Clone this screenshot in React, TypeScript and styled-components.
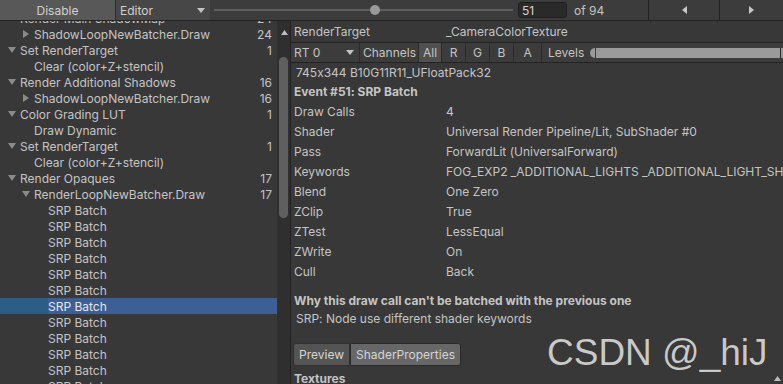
import React from "react";
import styled, { createGlobalStyle } from "styled-components";

const GlobalStyle = createGlobalStyle`
  html, body {
    margin: 0;
    padding: 0;
    background: #383838;
  }
  body {
    font-family: Inter, "Noto Sans", sans-serif;
    font-size: 12px;
    color: #c4c4c4;
    font-feature-settings: "calt" 0;
  }
`;

type TreeNode = {
  name: string;
  level: number;
  arrow?: "down" | "right";
  count?: number;
  selected?: boolean;
};

const batches: TreeNode[] = Array.from({ length: 12 }, (_, i) => ({
  name: "SRP Batch",
  level: 2,
  selected: i === 6,
}));

const tree: TreeNode[] = [
  { name: "Render Main ShadowMap", level: 0, arrow: "down", count: 24 },
  { name: "ShadowLoopNewBatcher.Draw", level: 1, arrow: "right", count: 24 },
  { name: "Set RenderTarget", level: 0, arrow: "down", count: 1 },
  { name: "Clear (color+Z+stencil)", level: 1 },
  { name: "Render Additional Shadows", level: 0, arrow: "down", count: 16 },
  { name: "ShadowLoopNewBatcher.Draw", level: 1, arrow: "right", count: 16 },
  { name: "Color Grading LUT", level: 0, arrow: "down", count: 1 },
  { name: "Draw Dynamic", level: 1 },
  { name: "Set RenderTarget", level: 0, arrow: "down", count: 1 },
  { name: "Clear (color+Z+stencil)", level: 1 },
  { name: "Render Opaques", level: 0, arrow: "down", count: 17 },
  { name: "RenderLoopNewBatcher.Draw", level: 1, arrow: "down", count: 17 },
  ...batches,
];

const details: [string, string][] = [
  ["Draw Calls", "4"],
  ["Shader", "Universal Render Pipeline/Lit, SubShader #0"],
  ["Pass", "ForwardLit (UniversalForward)"],
  ["Keywords", "FOG_EXP2 _ADDITIONAL_LIGHTS _ADDITIONAL_LIGHT_SHADOWS _MAIN_LIGHT_SHADOWS"],
  ["Blend", "One Zero"],
  ["ZClip", "True"],
  ["ZTest", "LessEqual"],
  ["ZWrite", "On"],
  ["Cull", "Back"],
];

const channels = [
  { label: "All", width: 23, active: true },
  { label: "R", width: 24 },
  { label: "G", width: 24 },
  { label: "B", width: 24 },
  { label: "A", width: 28 },
];

const EVENT = 51;
const TOTAL = 94;

const DownArrow = ({ color = "#8a8a8a" }: { color?: string }) => (
  <svg width="8" height="8" viewBox="0 0 8 8">
    <polygon points="0,1 8,1 4,7" fill={color} />
  </svg>
);

const RightArrow = ({ color = "#8a8a8a" }: { color?: string }) => (
  <svg width="8" height="8" viewBox="0 0 8 8">
    <polygon points="1,0 7,4 1,8" fill={color} />
  </svg>
);

const SmallDrop = () => (
  <svg width="8" height="5" viewBox="0 0 8 5">
    <polygon points="0,0 8,0 4,5" fill="#c4c4c4" />
  </svg>
);

const NavLeft = () => (
  <svg width="5" height="8" viewBox="0 0 5 8">
    <polygon points="5,0 0,4 5,8" fill="#c8c8c8" />
  </svg>
);

const NavRight = () => (
  <svg width="5" height="8" viewBox="0 0 5 8">
    <polygon points="0,0 5,4 0,8" fill="#c8c8c8" />
  </svg>
);

const UpTick = () => (
  <svg width="7" height="5" viewBox="0 0 7 5">
    <polygon points="0,5 7,5 3.5,0" fill="#bdbdbd" />
  </svg>
);

export default function App() {
  return (
    <>
      <GlobalStyle />
      <Window>
        <TopBar>
          <DisableButton>Disable</DisableButton>
          <EditorSelect>
            <span>Editor</span>
            <SmallDrop />
          </EditorSelect>
          <EventSlider>
            <SliderTrack>
              <SliderThumb style={{ left: `${(EVENT / TOTAL) * 100 - 2}%` }} />
            </SliderTrack>
          </EventSlider>
          <NumberField>{EVENT}</NumberField>
          <OfLabel>of {TOTAL}</OfLabel>
          <NavButton>
            <NavLeft />
          </NavButton>
          <NavButton $grow>
            <NavRight />
          </NavButton>
        </TopBar>

        <Main>
          <TreePane>
            <TreeScroll>
              {tree.map((node, i) => (
                <TreeRow key={i} $selected={node.selected}>
                  <Indent $level={node.level} />
                  <ArrowSlot>
                    {node.arrow === "down" && <DownArrow />}
                    {node.arrow === "right" && <RightArrow />}
                  </ArrowSlot>
                  <RowName $selected={node.selected}>{node.name}</RowName>
                  {node.count !== undefined && <RowCount>{node.count}</RowCount>}
                </TreeRow>
              ))}
            </TreeScroll>
          </TreePane>
          <ScrollBar>
            <ScrollUp>
              <UpTick />
            </ScrollUp>
            <ScrollThumb />
          </ScrollBar>

          <DetailPane>
            <TargetRow>
              <Label>RenderTarget</Label>
              <span>_CameraColorTexture</span>
            </TargetRow>
            <ChannelBar>
              <RtSelect>
                <span>RT 0</span>
                <SmallDrop />
              </RtSelect>
              <ChannelsLabel>Channels</ChannelsLabel>
              {channels.map((c) => (
                <ChannelButton key={c.label} $width={c.width} $active={c.active}>
                  {c.label}
                </ChannelButton>
              ))}
              <LevelsLabel>Levels</LevelsLabel>
              <LevelsKnob />
              <LevelsBar />
              <LevelsEnd />
            </ChannelBar>

            <FormatLine>745x344 B10G11R11_UFloatPack32</FormatLine>
            <EventTitle>Event #51: SRP Batch</EventTitle>
            {details.map(([k, v]) => (
              <DetailRow key={k}>
                <Label>{k}</Label>
                <Value>{v}</Value>
              </DetailRow>
            ))}
            <WhyTitle>Why this draw call can't be batched with the previous one</WhyTitle>
            <Reason>SRP: Node use different shader keywords</Reason>
            <Tabs>
              <Tab>Preview</Tab>
              <Tab $active>ShaderProperties</Tab>
            </Tabs>
            <TexturesRow>
              <span>Textures</span>
              <UpTick />
            </TexturesRow>
          </DetailPane>
        </Main>

        <Watermark>CSDN @_hiJ</Watermark>
      </Window>
    </>
  );
}

const Window = styled.div`
  position: relative;
  width: 783px;
  height: 384px;
  overflow: hidden;
  background: #383838;
  display: flex;
  flex-direction: column;
`;

const TopBar = styled.div`
  display: flex;
  align-items: stretch;
  height: 20px;
  flex-shrink: 0;
  background: #3c3c3c;
  border-bottom: 1px solid #232323;
  position: relative;
  z-index: 1;
`;

const DisableButton = styled.div`
  width: 115px;
  flex-shrink: 0;
  display: flex;
  align-items: center;
  justify-content: center;
  background: #585858;
  color: #d0d0d0;
  border-right: 1px solid #2e2e2e;
`;

const EditorSelect = styled.div`
  width: 94px;
  flex-shrink: 0;
  box-sizing: border-box;
  display: flex;
  align-items: center;
  justify-content: space-between;
  padding: 0 5px 0 4px;
  background: #474747;
  color: #d0d0d0;
`;

const EventSlider = styled.div`
  width: 304px;
  flex-shrink: 0;
  box-sizing: border-box;
  display: flex;
  align-items: center;
  padding: 0 1px 0 4px;
`;

const SliderTrack = styled.div`
  position: relative;
  flex: 1;
  height: 2px;
  background: #5e5e5e;
`;

const SliderThumb = styled.div`
  position: absolute;
  top: -4px;
  width: 10px;
  height: 10px;
  border-radius: 50%;
  background: #999999;
`;

const NumberField = styled.div`
  width: 49px;
  flex-shrink: 0;
  box-sizing: border-box;
  margin: 2px 0 2px 4px;
  padding-left: 3px;
  display: flex;
  align-items: center;
  background: #2a2a2a;
  border: 1px solid #1f1f1f;
  border-radius: 3px;
  color: #d2d2d2;
`;

const OfLabel = styled.div`
  width: 81px;
  flex-shrink: 0;
  box-sizing: border-box;
  padding-left: 7px;
  display: flex;
  align-items: center;
`;

const NavButton = styled.div<{ $grow?: boolean }>`
  width: 70px;
  flex: ${(p) => (p.$grow ? 1 : "none")};
  display: flex;
  align-items: center;
  justify-content: center;
  border-left: 1px solid #232323;
`;

const Main = styled.div`
  flex: 1;
  display: flex;
  min-height: 0;
`;

const TreePane = styled.div`
  width: 277px;
  overflow: hidden;
`;

const TreeScroll = styled.div`
  margin-top: -11px;
`;

const TreeRow = styled.div<{ $selected?: boolean }>`
  height: 16px;
  display: flex;
  align-items: center;
  padding: 0 5px 0 6px;
  background: ${(p) =>
    p.$selected ? "linear-gradient(to right, #2c5d87 0 48px, #3e5f96 48px)" : "transparent"};
`;

const Indent = styled.div<{ $level: number }>`
  width: ${(p) => p.$level * 14}px;
  flex-shrink: 0;
`;

const ArrowSlot = styled.div`
  width: 14px;
  flex-shrink: 0;
  display: flex;
  align-items: center;
  padding-left: 2px;
  box-sizing: border-box;
`;

const RowName = styled.span<{ $selected?: boolean }>`
  flex: 1;
  white-space: nowrap;
  color: ${(p) => (p.$selected ? "#e6e6e6" : "#c4c4c4")};
`;

const RowCount = styled.span`
  text-align: right;
`;

const ScrollBar = styled.div`
  width: 13px;
  background: #2f2f2f;
  border-right: 1px solid #232323;
  display: flex;
  flex-direction: column;
  align-items: center;
`;

const ScrollUp = styled.div`
  height: 14px;
  display: flex;
  align-items: flex-end;
  padding-left: 1px;
`;

const ScrollThumb = styled.div`
  margin-top: 22px;
  width: 9px;
  height: 161px;
  border-radius: 5px;
  background: #5f5f5f;
`;

const DetailPane = styled.div`
  flex: 1;
  min-width: 0;
  overflow: hidden;
  white-space: nowrap;
`;

const TargetRow = styled.div`
  height: 21px;
  display: flex;
  align-items: center;
  padding-left: 3px;
  border-bottom: 1px solid #232323;
`;

const Label = styled.span`
  width: 152px;
  flex-shrink: 0;
`;

const ChannelBar = styled.div`
  height: 19px;
  display: flex;
  align-items: stretch;
  background: #3c3c3c;
  border-bottom: 1px solid #232323;
`;

const RtSelect = styled.div`
  width: 69px;
  box-sizing: border-box;
  display: flex;
  align-items: center;
  justify-content: space-between;
  padding: 0 5px 0 3px;
  border-right: 1px solid #2a2a2a;
`;

const ChannelsLabel = styled.div`
  display: flex;
  align-items: center;
  padding: 0 2px 0 3px;
  border-right: 1px solid #2a2a2a;
`;

const ChannelButton = styled.div<{ $width: number; $active?: boolean }>`
  width: ${(p) => p.$width}px;
  box-sizing: border-box;
  display: flex;
  align-items: center;
  justify-content: center;
  background: ${(p) => (p.$active ? "#505050" : "#3c3c3c")};
  border-right: 1px solid #2a2a2a;
`;

const LevelsLabel = styled.div`
  display: flex;
  align-items: center;
  margin-left: 6px;
  margin-right: 6px;
`;

const LevelsKnob = styled.div`
  align-self: center;
  width: 5px;
  height: 10px;
  border-radius: 5px 0 0 5px;
  background: #9a9a9a;
  margin-right: 1px;
`;

const LevelsBar = styled.div`
  align-self: center;
  flex: 1;
  height: 10px;
  background: #9a9a9a;
  border-right: 1px solid #2a2a2a;
`;

const LevelsEnd = styled.div`
  align-self: center;
  width: 2px;
  height: 10px;
  background: #9a9a9a;
`;

const FormatLine = styled.div`
  height: 20px;
  line-height: 20px;
  padding-left: 5px;
`;

const EventTitle = styled.div`
  height: 18px;
  line-height: 18px;
  padding-left: 3px;
  font-weight: 700;
`;

const DetailRow = styled.div`
  height: 20px;
  display: flex;
  align-items: center;
  padding-left: 3px;
`;

const Value = styled.span`
  white-space: nowrap;
`;

const WhyTitle = styled.div`
  margin-top: 11px;
  height: 18px;
  line-height: 18px;
  padding-left: 3px;
  font-weight: 700;
`;

const Reason = styled.div`
  height: 18px;
  line-height: 18px;
  padding-left: 5px;
`;

const Tabs = styled.div`
  margin: 15px 0 0 2px;
  display: flex;
  height: 23px;
`;

const Tab = styled.div<{ $active?: boolean }>`
  display: flex;
  align-items: center;
  padding: 0 5px;
  background: ${(p) => (p.$active ? "#676767" : "#545454")};
  color: #d4d4d4;
  border: 1px solid ${(p) => (p.$active ? "#2a2a2a" : "#303030")};
  border-radius: ${(p) => (p.$active ? "0 3px 3px 0" : "3px 0 0 3px")};
`;

const TexturesRow = styled.div`
  margin-top: 3px;
  height: 18px;
  display: flex;
  align-items: center;
  justify-content: space-between;
  padding: 0 2px 0 3px;
  font-weight: 700;
`;

const Watermark = styled.div`
  position: absolute;
  left: 547px;
  top: 334px;
  font-family: "Liberation Sans", Arial, sans-serif;
  font-size: 37px;
  line-height: 37px;
  color: rgba(222, 222, 222, 0.88);
  white-space: nowrap;
  pointer-events: none;
`;
